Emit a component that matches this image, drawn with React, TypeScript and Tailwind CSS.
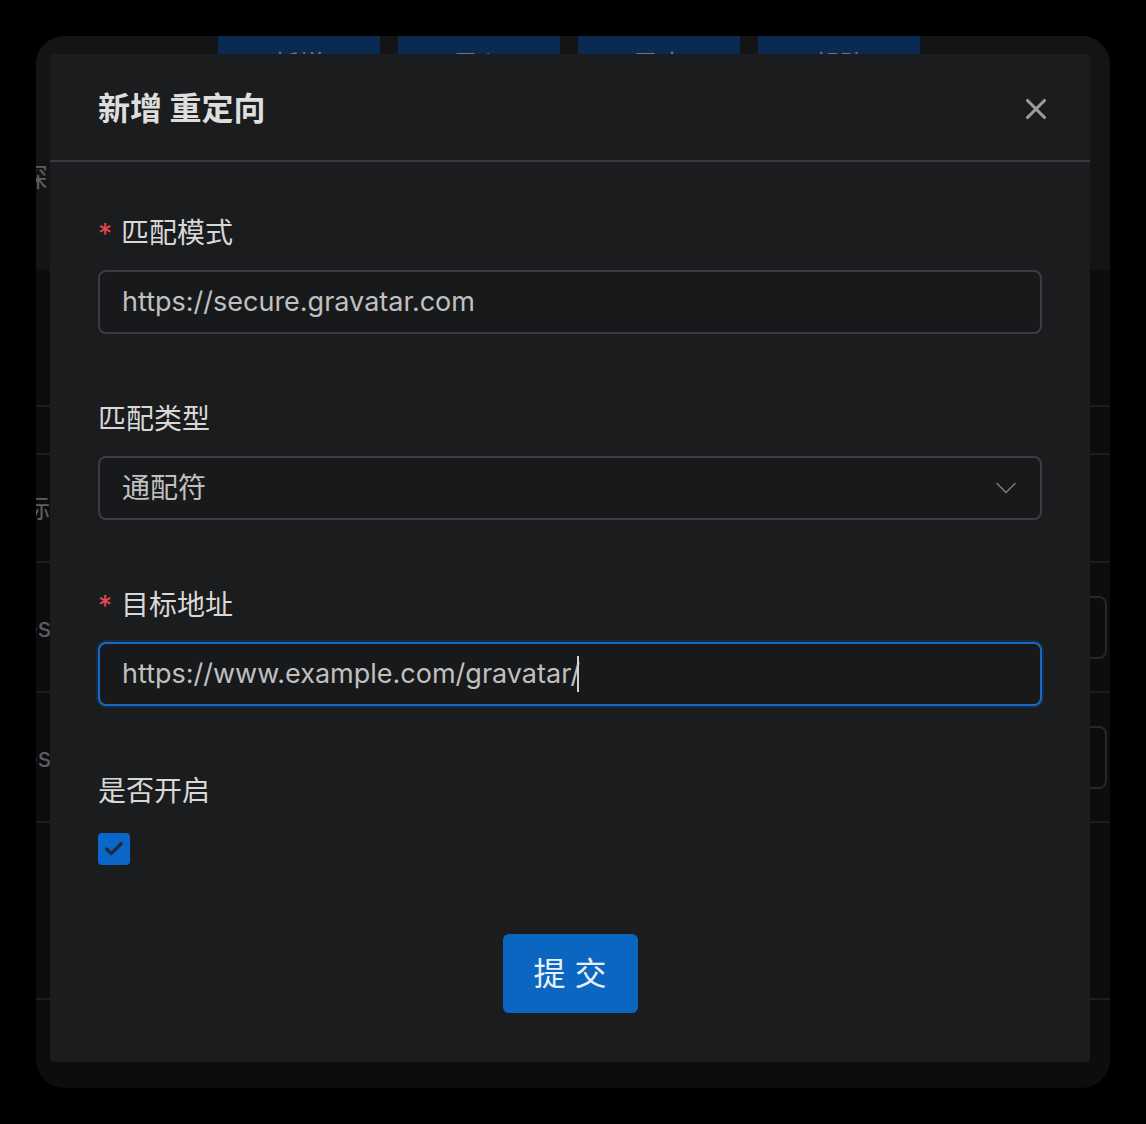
import { ChevronDown, X, Check } from "lucide-react";

const font = "font-['Inter','Noto_Sans_CJK_SC',sans-serif]";

function Field({
  label,
  required,
  children,
}: {
  label: string;
  required?: boolean;
  children: React.ReactNode;
}) {
  return (
    <div className="flex flex-col mb-[65px]">
      <label className="flex items-center h-[40px] text-[28px] leading-[40px] text-[#d8d8d8]">
        {required && (
          <span className="text-[#e5484d] text-[28px] mr-[9px] mt-[2px]">*</span>
        )}
        {label}
      </label>
      <div className="mt-[17px]">{children}</div>
    </div>
  );
}

export default function App() {
  return (
    <div className={`min-h-screen bg-black p-[36px] ${font}`}>
      <div className="relative w-[1074px] h-[1052px] rounded-[28px] overflow-hidden bg-[#0c0d0e]">
        {/* page behind the dialog */}
        <section className="h-[234px] bg-[#131415] flex flex-col">
          <div className="flex gap-[18px] pl-[182px]">
            {["新增", "导入", "导出", "帮助"].map((t) => (
              <div
                key={t}
                className="w-[162px] h-[56px] bg-[#0b2a52] rounded-b-[6px] flex items-center justify-center text-[26px] text-[#6b7686]"
              >
                {t}
              </div>
            ))}
          </div>
          <div className="mt-[66px] ml-[-14px] text-[26px] text-[#5d5e60]">深</div>
        </section>
        <div className="flex flex-col text-[26px] text-[#5d5e60]">
          <div className="h-[137px] border-b-2 border-[#1c1d1f]" />
          <div className="h-[48px] border-b-2 border-[#1c1d1f]" />
          <div className="h-[108px] border-b-2 border-[#1c1d1f] flex items-center">
            <span className="ml-[-12px]">标</span>
          </div>
          <div className="h-[130px] border-b-2 border-[#1c1d1f] flex items-center justify-between">
            <span className="ml-[-14px]">os</span>
            <div className="w-[200px] h-[63px] border-2 border-[#262729] rounded-[8px] mr-[3px]" />
          </div>
          <div className="h-[130px] border-b-2 border-[#1c1d1f] flex items-center justify-between">
            <span className="ml-[-14px]">os</span>
            <div className="w-[200px] h-[63px] border-2 border-[#262729] rounded-[8px] mr-[3px]" />
          </div>
          <div className="h-[177px] border-b-2 border-[#1c1d1f]" />
        </div>

        {/* dialog */}
        <div className="absolute left-[14px] top-[18px] w-[1040px] h-[1008px] bg-[#1b1c1e] rounded-[4px] flex flex-col">
          <header className="h-[108px] border-b-2 border-[#393a3d] flex items-center justify-between px-[48px] pt-[4px]">
            <h2 className="text-[32px] font-bold text-[#dedede]">新增 重定向</h2>
            <X size={34} strokeWidth={2.2} className="text-[#9c9d9f] mr-[-11px]" />
          </header>

          <div className="flex flex-col px-[48px] pt-[51px]">
            <Field label="匹配模式" required>
              <div className="h-[64px] border-2 border-[#3c3d40] rounded-[8px] bg-[#18191b] flex items-center pl-[22px] text-[27px] text-[#c0c0c0]">
                https://secure.gravatar.com
              </div>
            </Field>

            <Field label="匹配类型">
              <div className="h-[64px] border-2 border-[#3c3d40] rounded-[8px] bg-[#18191b] flex items-center justify-between pl-[22px] pr-[16px] text-[28px] text-[#c0c0c0]">
                通配符
                <ChevronDown size={36} strokeWidth={1.1} className="text-[#77787a]" />
              </div>
            </Field>

            <Field label="目标地址" required>
              <div className="h-[64px] border-2 border-[#1769c7] rounded-[8px] bg-[#18191b] shadow-[0_0_0_2px_rgba(23,105,199,0.18)] flex items-center pl-[22px] text-[27px] text-[#c0c0c0]">
                https://www.example.com/gravatar/
                <span className="w-[2px] h-[36px] bg-[#d0d0d0] ml-[-3px]" />
              </div>
            </Field>

            <div className="flex flex-col">
              <label className="h-[40px] text-[28px] leading-[40px] text-[#d8d8d8]">是否开启</label>
              <div className="mt-[22px] w-[32px] h-[32px] rounded-[4px] bg-[#0b66c9] flex items-center justify-center">
                <Check size={22} strokeWidth={3.5} className="text-[#1f2b3d]" />
              </div>
            </div>

            <div className="flex justify-center mt-[69px]">
              <button className="w-[135px] h-[79px] rounded-[6px] bg-[#0b66c2] text-[32px] text-[#eaf0f8]">
                提 交
              </button>
            </div>
          </div>
        </div>
      </div>
    </div>
  );
}
